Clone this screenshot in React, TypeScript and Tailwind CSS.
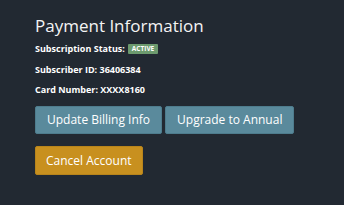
export default function App() {
  return (
    <div className="w-[344px] h-[205px] bg-[#222932] text-white pt-[14px] pl-[35px]" style={{ fontFamily: '"Open Sans", sans-serif' }}>
      <h1 className="text-[17px] leading-[24px] text-[#f4f4f4]">Payment Information</h1>
      <div className="mt-[4px] flex items-center text-[9px] font-bold leading-[14px]">
        <span>Subscription Status:</span>
        <span className="ml-[3px] inline-flex items-center h-[10px] px-[4px] bg-[#6c9a6e] text-[6.5px] leading-none rounded-[1px]">ACTIVE</span>
      </div>
      <div className="mt-[7px] text-[9px] font-bold leading-[14px]">Subscriber ID: 36406384</div>
      <div className="mt-[6px] text-[9px] font-bold leading-[14px]">Card Number: XXXX8160</div>
      <div className="mt-[9px] flex gap-[3px]">
        <button className="h-[28px] px-[11px] bg-[#5a8a9c] border border-[#4e7c8d] rounded-[2px] text-[12px] text-white">Update Billing Info</button>
        <button className="h-[28px] px-[11px] bg-[#5a8a9c] border border-[#4e7c8d] rounded-[2px] text-[12px] text-white">Upgrade to Annual</button>
      </div>
      <div className="mt-[12px]">
        <button className="h-[29px] px-[10px] bg-[#c8901f] border border-[#b8841b] rounded-[2px] text-[12px] text-white">Cancel Account</button>
      </div>
    </div>
  );
}
